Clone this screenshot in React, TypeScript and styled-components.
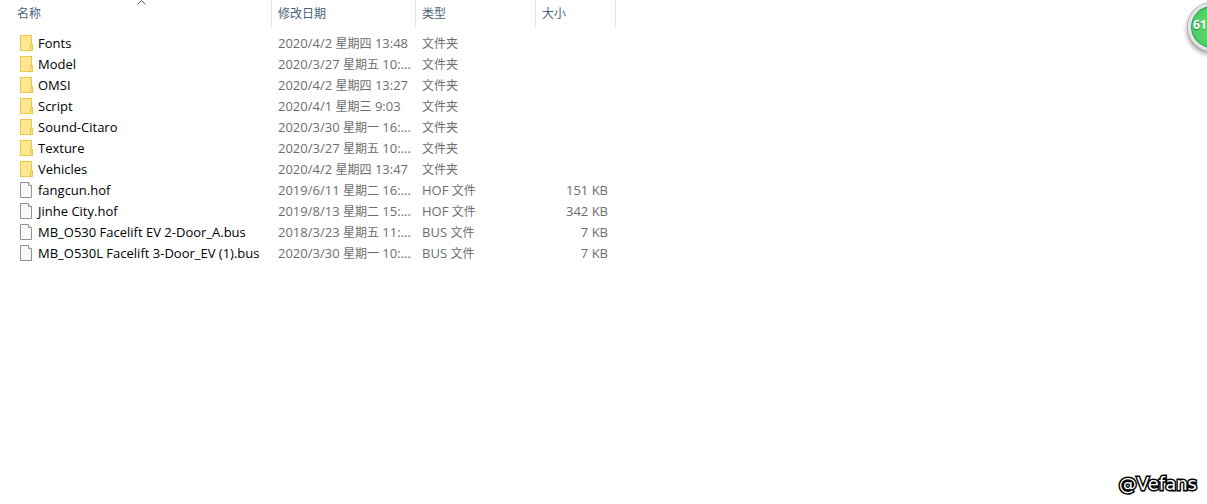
import React from "react";
import styled, { createGlobalStyle } from "styled-components";

const GlobalStyle = createGlobalStyle`
  * { box-sizing: border-box; }
  body {
    margin: 0;
    background: #fff;
    font-family: "Open Sans", "Noto Sans CJK SC", sans-serif;
    font-size: 13px;
    color: #6d6d6d;
  }
`;

const Page = styled.main`
  position: relative;
  min-height: 100vh;
  overflow: hidden;
`;

const FileTable = styled.table`
  table-layout: fixed;
  width: 616px;
  border-collapse: separate;
  border-spacing: 0;
`;

const Column = styled.col<{ $width: number }>`
  width: ${(p) => p.$width}px;
`;

const HeaderCell = styled.th<{ $first?: boolean }>`
  position: relative;
  height: 27px;
  padding: 0 6px 0 ${(p) => (p.$first ? 17 : 6)}px;
  border-right: 1px solid #e5e5e5;
  text-align: left;
  font-size: 12px;
  font-weight: 400;
  line-height: 20px;
  color: #4c607a;
`;

const SortButton = styled.button`
  padding: 0;
  border: 0;
  background: none;
  font: inherit;
  color: inherit;
`;

const SortArrow = styled.svg`
  position: absolute;
  top: 0;
  left: 50%;
`;

const FileRows = styled.tbody`
  &::before {
    content: "";
    display: block;
    height: 6px;
  }
`;

const Cell = styled.td<{ $align?: "right" }>`
  height: 21px;
  padding: 0 8px 0 6px;
  overflow: hidden;
  white-space: nowrap;
  text-overflow: ellipsis;
  line-height: 21px;
  text-align: ${(p) => p.$align ?? "left"};
`;

const NameCell = styled(Cell)`
  padding-left: 20px;
  color: #000;
`;

const DateCell = styled(Cell)`
  padding-right: 3px;
`;

const NameBox = styled.div`
  display: flex;
  align-items: center;
  gap: 4px;
`;

const Icon = styled.svg`
  flex: none;
  margin-bottom: 1px;
`;

const Han = styled.span`
  font-size: 12px;
`;

const Badge = styled.div`
  position: absolute;
  top: 3px;
  right: -29px;
  width: 48px;
  height: 48px;
  padding: 10px 0 0 2px;
  border: 3px solid #e4e6e6;
  border-radius: 50%;
  background: radial-gradient(circle at 50% 50%, #62dc74 0, #4fd065 60%, #35b254 100%);
  box-shadow: 0 0 0 1px #a9adad, inset 0 0 0 1px #2c9950, -1px 3px 5px rgba(0, 0, 0, 0.4);
  color: #fff;
  font: bold 12px/18px "Open Sans", sans-serif;
  text-shadow: 0 1px 1px #1f7a38;
`;

const Watermark = styled.div`
  position: absolute;
  right: 10px;
  bottom: 10px;
  color: #fff;
  font: 18px/20px "DejaVu Sans", sans-serif;
  -webkit-text-stroke: 3px #000;
  paint-order: stroke fill;
`;

const FolderIcon = () => (
  <Icon width="14" height="16" viewBox="0 0 14 16" shapeRendering="crispEdges" aria-hidden="true">
    <rect x="0.5" y="0.5" width="11" height="15" fill="#ffe692" stroke="#edc749" />
    <path d="M10.5 15.5V9.5H12.5V15.5Z" fill="#ffe07a" stroke="#edc749" />
  </Icon>
);

const FileIcon = () => (
  <Icon width="14" height="16" viewBox="0 0 14 16" aria-hidden="true">
    <path d="M0.5 0.5H8.5L11.5 3.5V15.5H0.5Z" fill="#f8f9f9" stroke="#929292" />
    <path d="M8.5 0.5V3.5H11.5" fill="#fff" stroke="#929292" />
  </Icon>
);

/* Chinese characters are set one size smaller than the Latin text beside them. */
const MixedText = ({ text }: { text: string }) => (
  <>
    {text.split(/([\u4e00-\u9fff]+)/).map((part, i) =>
      i % 2 ? <Han key={i}>{part}</Han> : part
    )}
  </>
);

const files: [string, string, string, string][] = [
  ["Fonts", "2020/4/2 星期四 13:48", "文件夹", ""],
  ["Model", "2020/3/27 星期五 10:22", "文件夹", ""],
  ["OMSI", "2020/4/2 星期四 13:27", "文件夹", ""],
  ["Script", "2020/4/1 星期三 9:03", "文件夹", ""],
  ["Sound-Citaro", "2020/3/30 星期一 16:22", "文件夹", ""],
  ["Texture", "2020/3/27 星期五 10:22", "文件夹", ""],
  ["Vehicles", "2020/4/2 星期四 13:47", "文件夹", ""],
  ["fangcun.hof", "2019/6/11 星期二 16:22", "HOF 文件", "151 KB"],
  ["Jinhe City.hof", "2019/8/13 星期二 15:22", "HOF 文件", "342 KB"],
  ["MB_O530 Facelift EV 2-Door_A.bus", "2018/3/23 星期五 11:22", "BUS 文件", "7 KB"],
  ["MB_O530L Facelift 3-Door_EV (1).bus", "2020/3/30 星期一 10:22", "BUS 文件", "7 KB"],
];

export default function App() {
  return (
    <Page>
      <GlobalStyle />
      <FileTable>
        <colgroup>
          <Column $width={272} />
          <Column $width={144} />
          <Column $width={120} />
          <Column $width={80} />
        </colgroup>
        <thead>
          <tr>
            <HeaderCell $first aria-sort="ascending">
              <SortButton>名称</SortButton>
              <SortArrow width="10" height="5" viewBox="0 0 10 5" aria-hidden="true">
                <path d="M1.5 4.5L5.5 0.5L9.5 4.5" fill="none" stroke="#555" />
              </SortArrow>
            </HeaderCell>
            <HeaderCell><SortButton>修改日期</SortButton></HeaderCell>
            <HeaderCell><SortButton>类型</SortButton></HeaderCell>
            <HeaderCell><SortButton>大小</SortButton></HeaderCell>
          </tr>
        </thead>
        <FileRows>
          {files.map(([name, date, type, size]) => (
            <tr key={name}>
              <NameCell>
                <NameBox>
                  {size ? <FileIcon /> : <FolderIcon />}
                  {name}
                </NameBox>
              </NameCell>
              <DateCell><MixedText text={date} /></DateCell>
              <Cell><MixedText text={type} /></Cell>
              <Cell $align="right">{size}</Cell>
            </tr>
          ))}
        </FileRows>
      </FileTable>
      <Badge>61</Badge>
      <Watermark>@Vefans</Watermark>
    </Page>
  );
}
